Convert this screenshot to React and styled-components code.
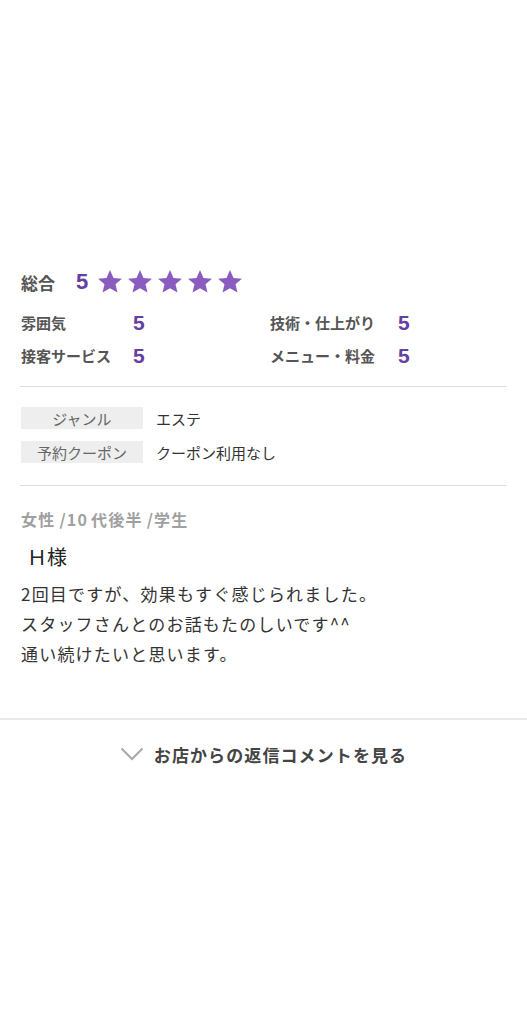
import React from "react";
import styled, { createGlobalStyle } from "styled-components";

const Global = createGlobalStyle`
  html, body { margin: 0; padding: 0; background: #fff; }
  body { font-family: "Noto Sans CJK JP", "Noto Sans", sans-serif; color: #333; }
`;

const Page = styled.div`
  width: 527px;
  padding-top: 267px;
  padding-bottom: 200px;
`;

const Inner = styled.div`
  padding: 0 20px;
`;

const TotalRow = styled.div`
  display: flex;
  align-items: center;
  height: 30px;
  padding-left: 1px;
`;

const TotalLabel = styled.span`
  font-size: 17px;
  font-weight: 700;
  color: #555;
  width: 55px;
`;

const Score = styled.span`
  font-family: "Liberation Sans", Arial, sans-serif;
  font-size: ${(p) => p.$size || 21}px;
  font-weight: 700;
  color: #6440a0;
  line-height: 1;
`;

const Stars = styled.div`
  display: flex;
  gap: 4px;
  margin-left: 9px;
`;

const SubGrid = styled.div`
  display: grid;
  grid-template-columns: 249px 1fr;
  margin-top: 9px;
`;

const SubItem = styled.div`
  display: flex;
  align-items: center;
  height: 33px;
  padding-left: 1px;
`;

const SubLabel = styled.span`
  font-size: 15px;
  font-weight: 700;
  color: #555;
  width: ${(p) => p.$w}px;
`;

const Divider = styled.div`
  height: 1px;
  background: #ddd;
  margin-top: ${(p) => p.$mt}px;
`;

const InfoTable = styled.div`
  display: flex;
  flex-direction: column;
  gap: 12px;
  margin-top: 20px;
`;

const InfoRow = styled.div`
  display: flex;
  align-items: center;
  padding-left: 1px;
`;

const InfoLabel = styled.div`
  width: 122px;
  height: 22px;
  background: #eee;
  color: #666;
  font-size: 15px;
  display: flex;
  align-items: center;
  justify-content: center;
`;

const InfoValue = styled.div`
  margin-left: 13px;
  font-size: 15px;
  color: #333;
`;

const Profile = styled.div`
  margin-top: 21px;
  font-size: 16px;
  line-height: 24px;
  font-weight: 700;
  letter-spacing: 1.2px;
  color: #a0a0a0;
  padding-left: 1px;
`;

const Gap = styled.span`
  margin-left: ${(p) => p.$w}px;
`;

const Name = styled.div`
  margin-top: 11px;
  font-size: 20px;
  line-height: 30px;
  color: #222;
  padding-left: 7px;
`;

const Body = styled.p`
  margin: 7px 0 0;
  font-size: 17px;
  line-height: 30px;
  letter-spacing: 1.2px;
  color: #333;
  padding-left: 1px;
`;

const FullDivider = styled.div`
  height: 2px;
  background: #e8e8e8;
  margin-top: 49px;
`;

const ReplyButton = styled.button`
  width: 100%;
  height: 70px;
  border: none;
  background: none;
  display: flex;
  align-items: center;
  justify-content: center;
  gap: 10px;
  font-family: inherit;
  font-size: 17px;
  font-weight: 700;
  letter-spacing: 1.1px;
  color: #444;
  padding: 0 0 2px;
  cursor: pointer;
`;

const Star = () => (
  <svg width="26" height="26" viewBox="0 0 24 24">
    <path
      d="M12 1l3.2 7.2 7.8.7-5.9 5.2 1.8 7.7L12 17.8l-6.9 4 1.8-7.7L1 8.9l7.8-.7z"
      fill="#8a5cc0"
    />
  </svg>
);

const Chevron = () => (
  <svg width="24" height="14" viewBox="0 0 24 14">
    <path d="M1.5 1.5l10.5 10.5L22.5 1.5" fill="none" stroke="#aaa" strokeWidth="2.2" />
  </svg>
);

export default function App() {
  return (
    <Page>
      <Global />
      <Inner>
        <TotalRow>
          <TotalLabel>総合</TotalLabel>
          <Score $size={22}>5</Score>
          <Stars>
            {[0, 1, 2, 3, 4].map((i) => (
              <Star key={i} />
            ))}
          </Stars>
        </TotalRow>
        <SubGrid>
          <SubItem>
            <SubLabel $w={112}>雰囲気</SubLabel>
            <Score>5</Score>
          </SubItem>
          <SubItem>
            <SubLabel $w={128}>技術・仕上がり</SubLabel>
            <Score>5</Score>
          </SubItem>
          <SubItem>
            <SubLabel $w={112}>接客サービス</SubLabel>
            <Score>5</Score>
          </SubItem>
          <SubItem>
            <SubLabel $w={128}>メニュー・料金</SubLabel>
            <Score>5</Score>
          </SubItem>
        </SubGrid>
        <Divider $mt={14} />
        <InfoTable>
          <InfoRow>
            <InfoLabel>ジャンル</InfoLabel>
            <InfoValue>エステ</InfoValue>
          </InfoRow>
          <InfoRow>
            <InfoLabel>予約クーポン</InfoLabel>
            <InfoValue>クーポン利用なし</InfoValue>
          </InfoRow>
        </InfoTable>
        <Divider $mt={22} />
        <Profile>
          女性<Gap $w={4}>/10</Gap><Gap $w={3}>代後半</Gap><Gap $w={4}>/学生</Gap>
        </Profile>
        <Name>Ｈ様</Name>
        <Body>
          2回目ですが、効果もすぐ感じられました。
          <br />
          スタッフさんとのお話もたのしいです^^
          <br />
          通い続けたいと思います。
        </Body>
      </Inner>
      <FullDivider />
      <ReplyButton>
        <Chevron />
        お店からの返信コメントを見る
      </ReplyButton>
    </Page>
  );
}
